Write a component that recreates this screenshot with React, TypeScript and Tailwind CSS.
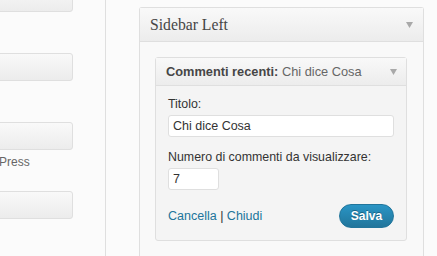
const Arrow = () => (
  <svg width="7" height="6" viewBox="0 0 7 6" className="shrink-0 text-[#a9a9a9]">
    <path d="M0 0h7L3.5 6z" fill="currentColor" />
  </svg>
);

// left column: available widgets, mostly cut off by the viewport
const LeftBox = () => (
  <div className="h-[28px] rounded-[3px] border border-[#dfdfdf] bg-gradient-to-b from-[#f9f9f9] to-[#ececec]" />
);

export default function App() {
  return (
    <div className="flex h-[256px] w-[437px] overflow-hidden bg-[#fbfbfb] font-['Liberation_Sans',Arial,sans-serif] text-[#333]">
      <div className="w-[106px] shrink-0 border-r border-[#dfdfdf]">
        <div className="-ml-[6px] -mt-[16px] mr-[32px]">
          <LeftBox />
          <div className="h-[41px]" />
          <LeftBox />
          <div className="h-[41px]" />
          <LeftBox />
          <div className="h-[41px] pt-[5px] pl-[5px] text-[12px] leading-[14px] text-[#666]">Press</div>
          <LeftBox />
        </div>
      </div>

      {/* Sidebar Left */}
      <div className="ml-[33px] mt-[7px] w-[285px] shrink-0 self-start rounded-t-[3px] border border-b-0 border-[#dfdfdf] bg-[#f9f9f9]">
        <div className="flex h-[34px] items-center justify-between border-b border-[#dfdfdf] bg-gradient-to-b from-[#f9f9f9] to-[#ececec] pl-[10px] pr-[10px]">
          <span className="font-['Liberation_Serif',Georgia,serif] text-[15.7px] text-[#464646]">Sidebar Left</span>
          <Arrow />
        </div>

        <div className="pb-[30px] pl-[15px] pt-[15px]">
          <div className="w-[252px] rounded-[3px] border border-[#dfdfdf] bg-[#f4f4f4]">
            <div className="flex h-[28px] items-center justify-between border-b border-[#dfdfdf] bg-gradient-to-b from-[#f9f9f9] to-[#ececec] pl-[10px] pr-[9px] text-[12.8px]">
              <span className="text-[#464646]">
                <b>Commenti recenti:</b> <span className="text-[#666]">Chi dice Cosa</span>
              </span>
              <Arrow />
            </div>

            <div className="px-[12px] pb-[12px] pt-[10px] text-[12.4px] leading-[16px]">
              <label className="block">Titolo:</label>
              <input
                readOnly
                value="Chi dice Cosa"
                className="mt-[3px] block h-[22px] w-full rounded-[3px] border border-[#dfdfdf] bg-white px-[4px] text-[12.5px] text-[#333] outline-none"
              />
              <label className="mt-[12px] block">Numero di commenti da visualizzare:</label>
              <input
                readOnly
                value="7"
                className="mt-[3px] block h-[22px] w-[51px] rounded-[3px] border border-[#dfdfdf] bg-white px-[4px] text-[12.5px] text-[#333] outline-none"
              />
              <div className="mt-[14px] flex items-center justify-between">
                <span className="text-[12.5px] text-[#21759b]">
                  Cancella <span className="text-[#333]">|</span> Chiudi
                </span>
                <button className="h-[24px] w-[55px] rounded-full border border-[#21759b] bg-gradient-to-b from-[#2a95c5] to-[#21759b] text-[12px] font-bold text-white [text-shadow:0_-1px_0_rgba(0,0,0,0.3)]">
                  Salva
                </button>
              </div>
            </div>
          </div>
        </div>
      </div>
    </div>
  );
}
